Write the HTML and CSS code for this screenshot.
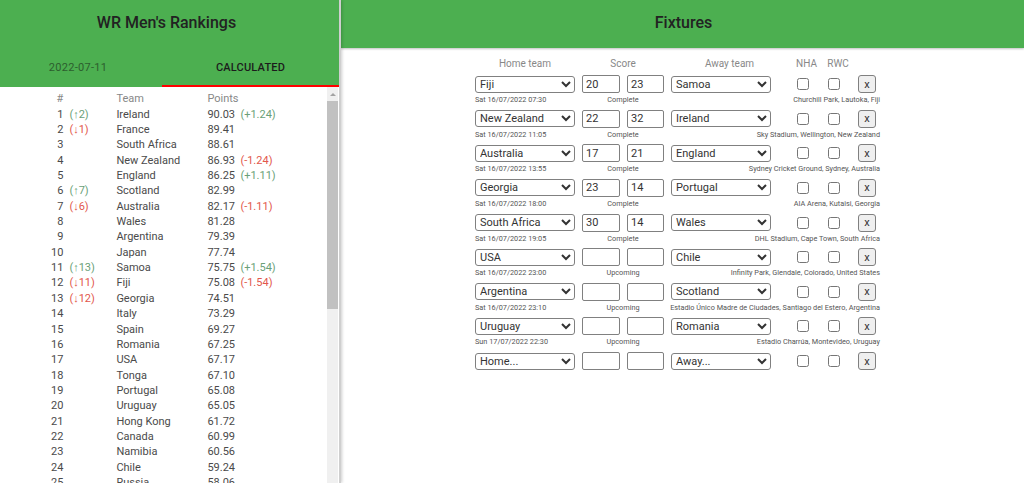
FILE: index.html
```html
<!DOCTYPE html>
<html lang="en">
<head>
    <meta charset="UTF-8">
    <title>WR Men's Rankings</title>
    <link rel="stylesheet" href="styles.css">
</head>
<body>
    <!-- Rankings -->
    <aside class="rankings">
        <header class="rankings-header">
            <h1>WR Men's Rankings</h1>
            <div class="tabs">
                <div class="tab">2022-07-11</div>
                <div class="tab active">CALCULATED</div>
            </div>
        </header>
        <div class="rankings-scroll">
            <table class="rank-table">
                <thead>
                    <tr><th>#</th><th></th><th>Team</th><th>Points</th><th></th></tr>
                </thead>
                <tbody>
                    <tr><td>1</td><td class="up">(↑2)</td><td>Ireland</td><td>90.03</td><td class="up">(+1.24)</td></tr>
                    <tr><td>2</td><td class="down">(↓1)</td><td>France</td><td>89.41</td><td></td></tr>
                    <tr><td>3</td><td></td><td>South Africa</td><td>88.61</td><td></td></tr>
                    <tr><td>4</td><td></td><td>New Zealand</td><td>86.93</td><td class="down">(-1.24)</td></tr>
                    <tr><td>5</td><td></td><td>England</td><td>86.25</td><td class="up">(+1.11)</td></tr>
                    <tr><td>6</td><td class="up">(↑7)</td><td>Scotland</td><td>82.99</td><td></td></tr>
                    <tr><td>7</td><td class="down">(↓6)</td><td>Australia</td><td>82.17</td><td class="down">(-1.11)</td></tr>
                    <tr><td>8</td><td></td><td>Wales</td><td>81.28</td><td></td></tr>
                    <tr><td>9</td><td></td><td>Argentina</td><td>79.39</td><td></td></tr>
                    <tr><td>10</td><td></td><td>Japan</td><td>77.74</td><td></td></tr>
                    <tr><td>11</td><td class="up">(↑13)</td><td>Samoa</td><td>75.75</td><td class="up">(+1.54)</td></tr>
                    <tr><td>12</td><td class="down">(↓11)</td><td>Fiji</td><td>75.08</td><td class="down">(-1.54)</td></tr>
                    <tr><td>13</td><td class="down">(↓12)</td><td>Georgia</td><td>74.51</td><td></td></tr>
                    <tr><td>14</td><td></td><td>Italy</td><td>73.29</td><td></td></tr>
                    <tr><td>15</td><td></td><td>Spain</td><td>69.27</td><td></td></tr>
                    <tr><td>16</td><td></td><td>Romania</td><td>67.25</td><td></td></tr>
                    <tr><td>17</td><td></td><td>USA</td><td>67.17</td><td></td></tr>
                    <tr><td>18</td><td></td><td>Tonga</td><td>67.10</td><td></td></tr>
                    <tr><td>19</td><td></td><td>Portugal</td><td>65.08</td><td></td></tr>
                    <tr><td>20</td><td></td><td>Uruguay</td><td>65.05</td><td></td></tr>
                    <tr><td>21</td><td></td><td>Hong Kong</td><td>61.72</td><td></td></tr>
                    <tr><td>22</td><td></td><td>Canada</td><td>60.99</td><td></td></tr>
                    <tr><td>23</td><td></td><td>Namibia</td><td>60.56</td><td></td></tr>
                    <tr><td>24</td><td></td><td>Chile</td><td>59.24</td><td></td></tr>
                    <tr><td>25</td><td></td><td>Russia</td><td>58.06</td><td></td></tr>
                </tbody>
            </table>
            <!-- Barra de desplazamiento -->
            <div class="scrollbar">
                <div class="scrollbar-arrow"></div>
                <div class="scrollbar-thumb"></div>
            </div>
        </div>
    </aside>

    <!-- Fixtures -->
    <main class="fixtures">
        <header class="fixtures-header"><h2>Fixtures</h2></header>
        <div class="fixtures-list">
            <div class="fixture-row fixture-head">
                <span>Home team</span>
                <span>Score</span>
                <span>Away team</span>
                <span>NHA</span>
                <span>RWC</span>
            </div>

            <div class="fixture">
                <div class="fixture-row">
                    <select><option>Fiji</option></select>
                    <input class="score" type="text" value="20"><input class="score" type="text" value="23">
                    <select><option>Samoa</option></select>
                    <input type="checkbox"><input type="checkbox">
                    <button>x</button>
                </div>
                <div class="fixture-info"><span>Sat 16/07/2022 07:30</span><span class="status">Complete</span><span class="venue">Churchill Park, Lautoka, Fiji</span></div>
            </div>

            <div class="fixture">
                <div class="fixture-row">
                    <select><option>New Zealand</option></select>
                    <input class="score" type="text" value="22"><input class="score" type="text" value="32">
                    <select><option>Ireland</option></select>
                    <input type="checkbox"><input type="checkbox">
                    <button>x</button>
                </div>
                <div class="fixture-info"><span>Sat 16/07/2022 11:05</span><span class="status">Complete</span><span class="venue">Sky Stadium, Wellington, New Zealand</span></div>
            </div>

            <div class="fixture">
                <div class="fixture-row">
                    <select><option>Australia</option></select>
                    <input class="score" type="text" value="17"><input class="score" type="text" value="21">
                    <select><option>England</option></select>
                    <input type="checkbox"><input type="checkbox">
                    <button>x</button>
                </div>
                <div class="fixture-info"><span>Sat 16/07/2022 13:55</span><span class="status">Complete</span><span class="venue">Sydney Cricket Ground, Sydney, Australia</span></div>
            </div>

            <div class="fixture">
                <div class="fixture-row">
                    <select><option>Georgia</option></select>
                    <input class="score" type="text" value="23"><input class="score" type="text" value="14">
                    <select><option>Portugal</option></select>
                    <input type="checkbox"><input type="checkbox">
                    <button>x</button>
                </div>
                <div class="fixture-info"><span>Sat 16/07/2022 18:00</span><span class="status">Complete</span><span class="venue">AIA Arena, Kutaisi, Georgia</span></div>
            </div>

            <div class="fixture">
                <div class="fixture-row">
                    <select><option>South Africa</option></select>
                    <input class="score" type="text" value="30"><input class="score" type="text" value="14">
                    <select><option>Wales</option></select>
                    <input type="checkbox"><input type="checkbox">
                    <button>x</button>
                </div>
                <div class="fixture-info"><span>Sat 16/07/2022 19:05</span><span class="status">Complete</span><span class="venue">DHL Stadium, Cape Town, South Africa</span></div>
            </div>

            <div class="fixture">
                <div class="fixture-row">
                    <select><option>USA</option></select>
                    <input class="score" type="text"><input class="score" type="text">
                    <select><option>Chile</option></select>
                    <input type="checkbox"><input type="checkbox">
                    <button>x</button>
                </div>
                <div class="fixture-info"><span>Sat 16/07/2022 23:00</span><span class="status">Upcoming</span><span class="venue">Infinity Park, Glendale, Colorado, United States</span></div>
            </div>

            <div class="fixture">
                <div class="fixture-row">
                    <select><option>Argentina</option></select>
                    <input class="score" type="text"><input class="score" type="text">
                    <select><option>Scotland</option></select>
                    <input type="checkbox"><input type="checkbox">
                    <button>x</button>
                </div>
                <div class="fixture-info"><span>Sat 16/07/2022 23:10</span><span class="status">Upcoming</span><span class="venue">Estadio Único Madre de Ciudades, Santiago del Estero, Argentina</span></div>
            </div>

            <div class="fixture">
                <div class="fixture-row">
                    <select><option>Uruguay</option></select>
                    <input class="score" type="text"><input class="score" type="text">
                    <select><option>Romania</option></select>
                    <input type="checkbox"><input type="checkbox">
                    <button>x</button>
                </div>
                <div class="fixture-info"><span>Sun 17/07/2022 22:30</span><span class="status">Upcoming</span><span class="venue">Estadio Charrúa, Montevideo, Uruguay</span></div>
            </div>

            <div class="fixture">
                <div class="fixture-row">
                    <select><option>Home...</option></select>
                    <input class="score" type="text"><input class="score" type="text">
                    <select><option>Away...</option></select>
                    <input type="checkbox"><input type="checkbox">
                    <button>x</button>
                </div>
            </div>
        </div>
    </main>
</body>
</html>
```

FILE: styles.css
```css
* {
    margin: 0;
    padding: 0;
    box-sizing: border-box;
    font-family: 'Roboto', sans-serif;
}

html, body {
    height: 100%;
    overflow: hidden;
}

body {
    display: flex;
    background: #fff;
    color: #4a4a4a;
}

/* Rankings */
.rankings {
    width: 341px;
    height: 100%;
    display: flex;
    flex-direction: column;
    flex-shrink: 0;
    border-right: 2px solid #cfcfcf;
    box-shadow: 1px 0 3px rgba(0, 0, 0, 0.2);
    position: relative;
    z-index: 1;
}

.rankings-header {
    background: #4caf50;
}

h1, h2 {
    font-size: 16px;
    font-weight: 500;
    color: #222;
    text-align: center;
}

h1 {
    height: 48px;
    line-height: 46px;
    padding-right: 6px;
}

.tabs {
    display: flex;
    height: 39px;
}

.tab {
    width: 162px;
    padding: 13px 6px 0 0;
    font-size: 11px;
    color: #2c5e2e;
    text-align: center;
    letter-spacing: 0.3px;
    border-bottom: 2px solid #4caf50;
}

.tab.active {
    flex: 1;
    padding-right: 0;
    color: #1c1c1c;
    font-weight: 500;
    letter-spacing: 0.2px;
    border-bottom-color: #f00;
}

.rankings-scroll {
    flex: 1;
    min-height: 0;
    overflow: hidden;
    position: relative;
}

/* Barra de desplazamiento */
.scrollbar {
    position: absolute;
    top: 0;
    bottom: 0;
    left: 327px;
    width: 11px;
    display: flex;
    flex-direction: column;
    align-items: stretch;
    background: #f0f0f0;
}

.scrollbar-arrow {
    width: 0;
    height: 0;
    margin: 6px auto 5px;
    border-left: 3px solid transparent;
    border-right: 3px solid transparent;
    border-bottom: 3px solid #a3a3a3;
}

.scrollbar-thumb {
    height: 208px;
    background: #c1c1c1;
}

/* Tabla de posiciones */
.rank-table {
    border-collapse: collapse;
    margin: 4px 0 0 51px;
    font-size: 11px;
}

.rank-table th,
.rank-table td {
    height: 15.36px;
    padding: 0;
    text-align: left;
    font-weight: 400;
    white-space: nowrap;
}

.rank-table th {
    color: #888;
}

.rank-table th:nth-child(1),
.rank-table td:nth-child(1) {
    width: 17px;
    text-align: right;
    padding-right: 6px;
}

.rank-table th:nth-child(2),
.rank-table td:nth-child(2) {
    width: 47px;
}

.rank-table th:nth-child(3),
.rank-table td:nth-child(3) {
    width: 91px;
}

.rank-table th:nth-child(4),
.rank-table td:nth-child(4) {
    width: 33px;
}

.rank-table .up {
    color: #6a9f78;
}

.rank-table .down {
    color: #e2574c;
}

/* Fixtures */
.fixtures {
    flex: 1;
    min-width: 0;
}

.fixtures-header {
    height: 48px;
    padding-left: 2px;
    background: #4caf50;
    box-shadow: 0 1px 2px rgba(0, 0, 0, 0.25);
}

h2 {
    line-height: 46px;
}

.fixtures-list {
    width: 405px;
    margin-left: 134px;
    padding-top: 7px;
}

.fixture-row {
    display: flex;
    align-items: center;
}

.fixture-head {
    height: 17px;
    margin-bottom: 3px;
    font-size: 10px;
    color: #888;
    text-align: center;
}

.fixture-head span:nth-child(1) {
    width: 100px;
}

.fixture-head span:nth-child(2) {
    width: 96px;
}

.fixture-head span:nth-child(3) {
    width: 117px;
}

.fixture-head span:nth-child(4) {
    width: 37px;
}

.fixture-head span:nth-child(5) {
    width: 26px;
}

.fixture {
    height: 34.65px;
}

.fixture-row select {
    width: 100px;
    height: 17px;
    font-size: 11px;
    color: #333;
    background: #fff;
    border: 1px solid #808080;
    border-radius: 3px;
}

.fixture-row .score {
    width: 38px;
    height: 18px;
    margin-left: 7px;
    padding: 0 3px;
    font-size: 11px;
    color: #333;
    border: 1px solid #808080;
    border-radius: 2px;
}

.fixture-row .score + .score {
    width: 37px;
}

.fixture-row .score + .score + select {
    margin-left: 7px;
}

.fixture-row input[type="checkbox"] {
    width: 12px;
    height: 12px;
    margin-left: 26px;
    appearance: auto;
}

.fixture-row input[type="checkbox"] + input[type="checkbox"] {
    margin-left: 19px;
}

.fixture-row button {
    width: 18px;
    height: 18px;
    margin-left: 18px;
    font-size: 11px;
    color: #333;
    background: #efefef;
    border: 1px solid #808080;
    border-radius: 3px;
}

.fixture-info {
    display: grid;
    grid-template-columns: 107px 82px 1fr;
    height: 11px;
    margin-top: 1px;
    font-size: 7.3px;
    line-height: 11px;
    color: #555;
    white-space: nowrap;
}

.fixture-info .status {
    text-align: center;
}

.fixture-info .venue {
    text-align: right;
}
```
